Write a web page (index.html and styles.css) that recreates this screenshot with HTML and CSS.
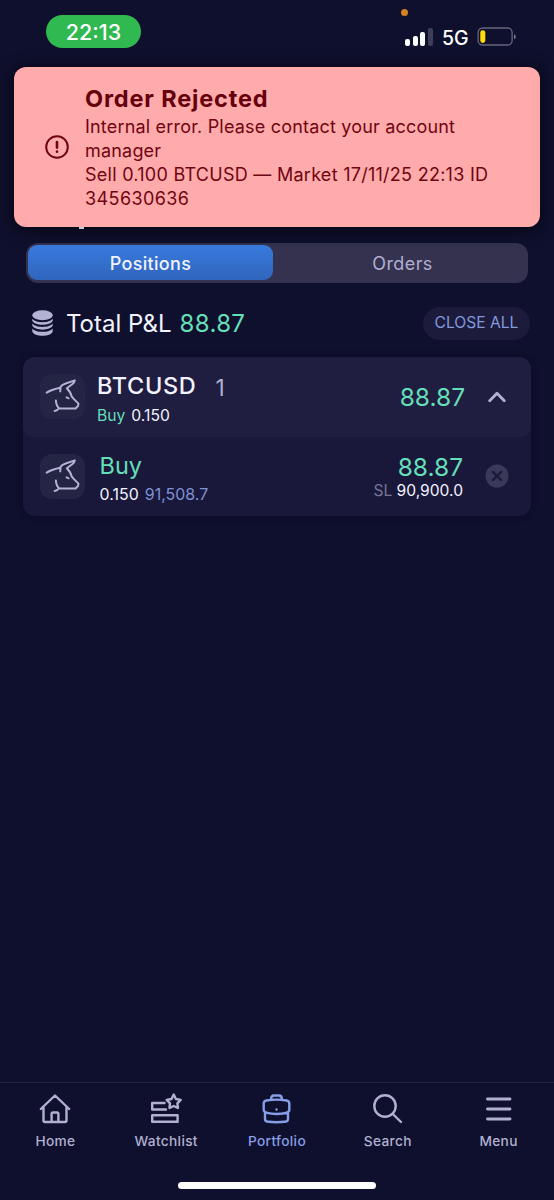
FILE: index.html
```html
<!DOCTYPE html>
<html lang="en">
<head>
<meta charset="utf-8">
<title>Portfolio</title>
<link rel="stylesheet" href="styles.css">
</head>
<body>
<svg class="defs" aria-hidden="true">
  <symbol id="bull" viewBox="0 0 45 45">
    <path d="M6.700 18.600Q11 16 20 13.800 21.500 10.800 25 9.800L34.800 6.400Q34.500 8.500 32.500 10L26.800 14.200Q31 18.500 31.600 22.400L34.200 25.400 38.500 29.600 38 32 35.600 34.500H19.500Q16.200 32 15.900 26.600M18.800 34.300Q17.500 36.800 14.600 37M20.600 13L20.200 17.400M26.600 23.400L28.600 24.300"/>
  </symbol>
</svg>
<div class="phone">
  <header class="status">
    <span class="time">22:13</span>
    <div class="signals">
      <i class="mic-dot"></i>
      <div class="bars"><i class="b1"></i><i class="b2"></i><i class="b3"></i><i class="b4"></i></div>
      <span class="network">5G</span>
      <svg class="battery" viewBox="0 0 40 20"><rect x="1.1" y="1" width="34" height="17" rx="4.5" fill="none" stroke="#65657b" stroke-width="1.3"/><path d="M37 7.2v5q1.8-.6 1.8-2.5T37 7.200Z" fill="#77778b"/><rect x="3.3" y="3.2" width="5" height="12.7" rx="2.4" fill="#ffdc0a"/></svg>
    </div>
  </header>

  <section class="toast">
    <svg class="alert" viewBox="0 0 24 24"><circle cx="12" cy="12" r="10.8"/><path d="M12 7v5.600" stroke-width="2.600"/><path d="M12 16.600v.1" stroke-width="2.600"/></svg>
    <div class="message">
      <h1>Order Rejected</h1>
      <p class="l1">Internal error. Please contact your account</p>
      <p class="l1">manager</p>
      <p class="l3">Sell 0.100 BTCUSD — Market 17/11/25 22:13 ID</p>
      <p>345630636</p>
    </div>
    <i class="heading-tail"></i>
  </section>

  <nav class="tabs"><span class="tab active">Positions</span><span class="tab">Orders</span></nav>

  <section class="total">
    <svg class="coins" viewBox="0 0 21 27"><ellipse cx="10.500" cy="5.200" rx="10.200" ry="5"/><path d="M.3 8.800C3.500 13.300 17.500 13.300 20.700 8.800V10.800C18.500 16.200 2.500 16.200.3 10.800ZM.3 13.600C3.500 18.100 17.500 18.100 20.700 13.600V15.600C18.500 21 2.500 21 .3 15.600ZM.3 18.400C3.500 22.900 17.500 22.900 20.700 18.400V21.500C18.500 27.300 2.500 27.300.3 21.500Z"/></svg>
    <span class="total-label">Total P&amp;L</span><span class="total-value">88.87</span>
    <button class="close-all"><span>CLOSE ALL</span></button>
  </section>

  <section class="card">
    <div class="row group">
      <div class="avatar"><svg><use href="#bull"/></svg></div>
      <div class="info">
        <div class="name"><span class="symbol">BTCUSD</span><span class="count">1</span></div>
        <div class="detail"><span class="green">Buy</span> <span>0.150</span></div>
      </div>
      <div class="profit">88.87</div>
      <svg class="chevron" viewBox="0 0 18 12"><path d="M1.700 9.800L9 2.200 16.300 9.800"/></svg>
    </div>
    <div class="row position">
      <div class="avatar"><svg><use href="#bull"/></svg></div>
      <div class="info">
        <div class="name green">Buy</div>
        <div class="detail"><span>0.150</span> <span class="price">91,508.7</span></div>
      </div>
      <div class="result"><div class="profit">88.87</div><div class="stop"><span>SL</span> 90,900.0</div></div>
      <svg class="close" viewBox="0 0 24 24"><circle cx="12" cy="12" r="11.500"/><path d="M7.800 7.800L16.200 16.200M16.200 7.800L7.800 16.200"/></svg>
    </div>
  </section>

  <footer class="bottom">
    <nav class="nav">
      <a><svg viewBox="0 0 32 32"><path d="M1.800 16L16 2.500 30.200 16M4.500 14V27.500Q4.500 29 6 29H26Q27.500 29 27.500 27.500V14M12.600 29V21Q12.600 19.500 14 19.500H18Q19.400 19.500 19.400 21V29"/></svg><span>Home</span></a>
      <a><svg viewBox="0 0 32 32"><path d="M14.500 10H2.200V16.500H16M2.200 22.300H27.600V28.700H2.200ZM23.700 1.500L25.900 6 30.700 6.900 27.400 10.300 27.900 15 23.700 13 19.500 15 20 10.300 16.700 6.900 21.500 6Z"/></svg><span>Watchlist</span></a>
      <a class="current"><svg viewBox="0 0 32 32"><path d="M5.500 7.500Q15.500 5.800 25.500 7.500Q28.300 8 28.300 10.500V17C28.300 19.500 23 21 15.500 21S2.700 19.500 2.700 17V10.500Q2.700 8 5.500 7.500ZM4 19.500V26Q4 28 6 28.500Q15.500 30 25 28.500Q27 28 27 26V19.500M10 6.500Q10 2.500 13 2.500H18Q21 2.500 21 6.500M15.500 16.500v.1"/></svg><span>Portfolio</span></a>
      <a><svg viewBox="0 0 32 32"><circle cx="13" cy="13" r="10.700"/><path d="M20.800 21L29 29"/></svg><span>Search</span></a>
      <a><svg class="menu" viewBox="0 0 32 32"><path d="M4.500 6H27M4.500 16H27M4.500 26H27"/></svg><span>Menu</span></a>
    </nav>
    <i class="home-indicator"></i>
  </footer>
</div>
</body>
</html>
```
FILE: styles.css
```css
* { box-sizing: border-box; }
body { margin: 0; background: #0f102d; font-family: Inter, sans-serif; color: #f3f2ff; }
.defs { display: none; }
.phone { width: 554px; height: 1200px; display: flex; flex-direction: column; overflow: hidden; }
svg { display: block; fill: none; stroke-linecap: round; stroke-linejoin: round; flex: none; }
i { display: block; }
span { white-space: nowrap; }

.status { height: 67px; flex: none; padding: 15px 37px 0 46px; display: flex; justify-content: space-between; align-items: flex-start; }
.time { width: 95px; height: 33px; border-radius: 17px; background: #2fb950; color: #fff; font-size: 21.5px; line-height: 34px; text-align: center; font-weight: 500; }
.signals { position: relative; display: flex; padding-top: 12px; }
.mic-dot { position: absolute; top: -6px; left: -4px; width: 7px; height: 7px; border-radius: 50%; background: #d58222; }
.bars { display: flex; align-items: flex-end; gap: 2.6px; height: 19px; width: 37px; }
.bars i { width: 5px; border-radius: 2px; background: #fff; }
.bars .b1 { height: 7px; } .bars .b2 { height: 10px; } .bars .b3 { height: 14px; }
.bars .b4 { height: 18px; background: #3e3e59; }
.network { width: 35px; font-size: 19.5px; line-height: 23px; color: #fff; font-weight: 500; }
.battery { width: 40px; height: 20px; }

.toast { position: relative; height: 160px; flex: none; margin: 0 14px; padding: 20px 0 0 31px; display: flex; gap: 16px; border-radius: 12px; background: #ffaaab; color: #6f0511; box-shadow: 0 2px 14px 3px #080819; }
.alert { width: 24px; height: 24px; margin-top: 48px; stroke: #6f0511; stroke-width: 2; }
.message h1 { margin: 0; padding-bottom: 4px; font-size: 23.5px; line-height: 24px; font-weight: 700; letter-spacing: .85px; color: #65000b; }
.message p { margin: 0; font-size: 18px; line-height: 24px; letter-spacing: .4px; white-space: nowrap; }
.message .l1 { letter-spacing: .19px; }
.message .l3 { letter-spacing: .27px; }
.heading-tail { position: absolute; left: 65px; bottom: -2px; width: 5px; height: 2px; background: #c8c7d4; }

.tabs { display: flex; margin: 16px 26px 0 26px; height: 40px; flex: none; padding: 2px; border-radius: 12px; background: #34324e; }
.tab { flex: 1; width: 0; padding-left: 6px; text-align: center; font-size: 18px; line-height: 37px; letter-spacing: .4px; border-radius: 9px; color: #b1aed2; }
.tab.active { flex: none; width: 245px; height: 35px; padding-left: 0; background: linear-gradient(#387add, #3065bd); color: #f1f3ff; font-weight: 500; letter-spacing: .3px; }

.total { display: flex; align-items: center; margin: 23px 24px 0 32px; height: 34px; flex: none; font-size: 24px; }
.coins { width: 21px; height: 27px; fill: #b3b1d4; margin-right: 13px; }
.total-value { margin-left: 8px; letter-spacing: .35px; }
.total-value, .green, .profit { color: #65dfb8; }
.close-all { margin-left: auto; width: 107px; height: 33px; border: 0; border-radius: 17px; background: #1c1b3c; color: #8299dd; font: 15.600px/31px Inter, sans-serif; padding: 0 0 2px; }

.card { margin: 17px 23px 0; height: 159px; flex: none; border-radius: 12px; overflow: hidden; background: #19183a; box-shadow: 0 0 6px #0b0b23; }
.row { display: flex; height: 80px; padding-left: 17px; padding-right: 22px; }
.group { background: #1f1d40; border-radius: 10px; }
.avatar { width: 45px; height: 45px; margin: 17px 12px 0 0; border-radius: 12px; background: #242545; }
.avatar svg { width: 45px; height: 45px; stroke: #b4b1d5; stroke-width: 2; }
.name { display: flex; font-size: 24px; line-height: 28px; height: 28px; margin-top: 15px; }
.symbol { font-weight: 500; font-size: 23.500px; letter-spacing: .65px; }
.count { margin-left: 19px; color: #b3b0d2; font-size: 22.500px; line-height: 31px; }
.detail { display: flex; gap: 6px; font-size: 15.700px; line-height: 20px; margin-top: 6px; }
.row > .profit { margin-left: auto; margin-top: 25px; }
.profit { font-size: 24.500px; line-height: 30px; }
.chevron { width: 18px; height: 12px; margin: 34px 3px 0 23px; stroke: #b3b1d2; stroke-width: 2.8; }
.position .info { margin-left: 2.5px; }
.position .name { margin-top: 15px; font-size: 23.500px; }
.position .detail { margin-top: 5px; font-size: 15.900px; letter-spacing: .05px; }
.price { color: #7d92d5; }
.result { margin-left: auto; text-align: right; padding-top: 15px; }
.stop { font-size: 15.600px; line-height: 17px; }
.stop span { color: #777497; }
.close { width: 24px; height: 24px; margin: 27px 0 0 22px; }
.close circle { fill: #3b395a; }
.close path { stroke: #1c1b3c; stroke-width: 2.4; }

.bottom { margin-top: auto; height: 118px; flex: none; border-top: 1px solid #22223f; }
.nav { display: flex; height: 99px; padding-top: 10px; }
.nav a { width: 20%; display: flex; flex-direction: column; align-items: center; color: #b2b0d1; }
.nav svg { width: 32px; height: 32px; stroke: currentColor; stroke-width: 2.4; }
.nav .menu { stroke-width: 2.9; }
.nav span { margin-top: 8px; font-size: 13.700px; line-height: 16px; letter-spacing: .33px; font-weight: 500; }
.nav .current { color: #879fe8; }
.home-indicator { width: 198px; height: 7px; border-radius: 4px; background: #fff; margin: 0 auto; }
```
